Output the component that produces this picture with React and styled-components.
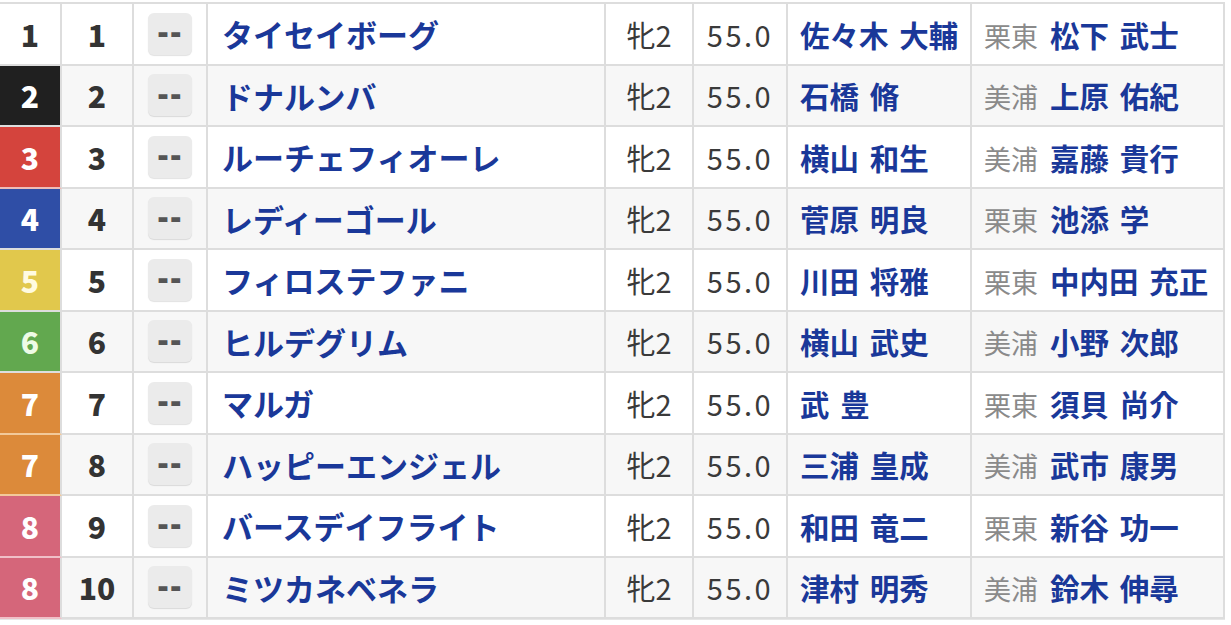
import React from "react";
import styled, { createGlobalStyle } from "styled-components";

const GlobalStyle = createGlobalStyle`
  body {
    margin: 0;
    padding-top: 2px;
    background: #fff;
    font-family: "Noto Sans CJK JP", "Noto Sans", sans-serif;
  }
`;

const wakuColors = {
  1: { bg: "#ffffff", fg: "#333333", line: "#dddddd" },
  2: { bg: "#202020", fg: "#ffffff", line: "#dddddd" },
  3: { bg: "#d4443d", fg: "#ffffff", line: "#eebcb8" },
  4: { bg: "#2f4ea6", fg: "#ffffff", line: "#dddddd" },
  5: { bg: "#e1c84c", fg: "#fffbe0", line: "#dddddd" },
  6: { bg: "#62a84f", fg: "#eefbe6", line: "#dddddd" },
  7: { bg: "#dc8a3a", fg: "#ffffff", line: "#f2c99a" },
  8: { bg: "#d5667a", fg: "#ffffff", line: "#f0c0c8" },
};

const Table = styled.table`
  width: 1225px;
  border-collapse: separate;
  border-spacing: 0;
  table-layout: fixed;
  border-top: 2px solid #dddddd;
  border-bottom: 1px solid #e6e6e6;
`;

const Row = styled.tr`
  background: ${(p) => (p.$even ? "#f7f7f7" : "#ffffff")};
`;

const Cell = styled.td`
  height: 59.5px;
  padding: 0;
  border-right: 2px solid #dddddd;
  border-bottom: 2px solid #dddddd;
  text-align: ${(p) => p.$align || "center"};
  padding-left: ${(p) => p.$pl || 0}px;
  vertical-align: middle;
  white-space: nowrap;
  color: #333;
`;

const WakuCell = styled(Cell)`
  background: ${(p) => wakuColors[p.$waku].bg};
  color: ${(p) => wakuColors[p.$waku].fg};
  border-bottom-color: ${(p) => wakuColors[p.$waku].line};
  font-size: 30px;
  font-weight: 900;
`;

const NumCell = styled(Cell)`
  font-size: 30px;
  font-weight: 900;
`;

const MarkButton = styled.div`
  width: 44px;
  height: 42px;
  margin: 0 auto;
  border-radius: 6px;
  background: #ebebeb;
  box-shadow: 0 1px 1px rgba(0, 0, 0, 0.12);
  display: flex;
  align-items: center;
  justify-content: center;
  span {
    display: inline-block;
    font-family: "Liberation Sans", sans-serif;
    font-weight: 700;
    font-size: 30px;
    color: #555;
    letter-spacing: 1px;
    transform: scale(1.15, 1.3);
    margin-top: -3px;
  }
`;

const HorseName = styled.span`
  font-size: 31px;
  font-weight: 700;
  color: #1a3899;
`;

const Plain = styled.span`
  font-size: 29px;
  color: #3a3a3a;
  letter-spacing: ${(p) => p.$ls || 0}px;
`;

const Person = styled.span`
  font-size: 29.5px;
  font-weight: 700;
  color: #1a3899;
  word-spacing: 4px;
`;

const Stable = styled.span`
  font-size: 27px;
  color: #8a8a8a;
  margin-right: 12px;
`;

const horses = [
  [1, 1, "タイセイボーグ", "佐々木 大輔", "栗東", "松下 武士"],
  [2, 2, "ドナルンバ", "石橋 脩", "美浦", "上原 佑紀"],
  [3, 3, "ルーチェフィオーレ", "横山 和生", "美浦", "嘉藤 貴行"],
  [4, 4, "レディーゴール", "菅原 明良", "栗東", "池添 学"],
  [5, 5, "フィロステファニ", "川田 将雅", "栗東", "中内田 充正"],
  [6, 6, "ヒルデグリム", "横山 武史", "美浦", "小野 次郎"],
  [7, 7, "マルガ", "武 豊", "栗東", "須貝 尚介"],
  [7, 8, "ハッピーエンジェル", "三浦 皇成", "美浦", "武市 康男"],
  [8, 9, "バースデイフライト", "和田 竜二", "栗東", "新谷 功一"],
  [8, 10, "ミツカネベネラ", "津村 明秀", "美浦", "鈴木 伸尋"],
];

export default function App() {
  return (
    <>
      <GlobalStyle />
      <Table>
        <colgroup>
          <col style={{ width: 62 }} />
          <col style={{ width: 72 }} />
          <col style={{ width: 74 }} />
          <col style={{ width: 398 }} />
          <col style={{ width: 88 }} />
          <col style={{ width: 94 }} />
          <col style={{ width: 184 }} />
          <col style={{ width: 253 }} />
        </colgroup>
        <tbody>
          {horses.map(([waku, num, name, jockey, area, trainer], i) => (
            <Row key={num} $even={i % 2 === 1}>
              <WakuCell $waku={waku}>{waku}</WakuCell>
              <NumCell>{num}</NumCell>
              <Cell>
                <MarkButton>
                  <span>--</span>
                </MarkButton>
              </Cell>
              <Cell $align="left" $pl={14}>
                <HorseName>{name}</HorseName>
              </Cell>
              <Cell>
                <Plain>牝2</Plain>
              </Cell>
              <Cell>
                <Plain $ls={2.5}>55.0</Plain>
              </Cell>
              <Cell $align="left" $pl={12}>
                <Person>{jockey}</Person>
              </Cell>
              <Cell $align="left" $pl={12}>
                <Stable>{area}</Stable>
                <Person>{trainer}</Person>
              </Cell>
            </Row>
          ))}
        </tbody>
      </Table>
    </>
  );
}
